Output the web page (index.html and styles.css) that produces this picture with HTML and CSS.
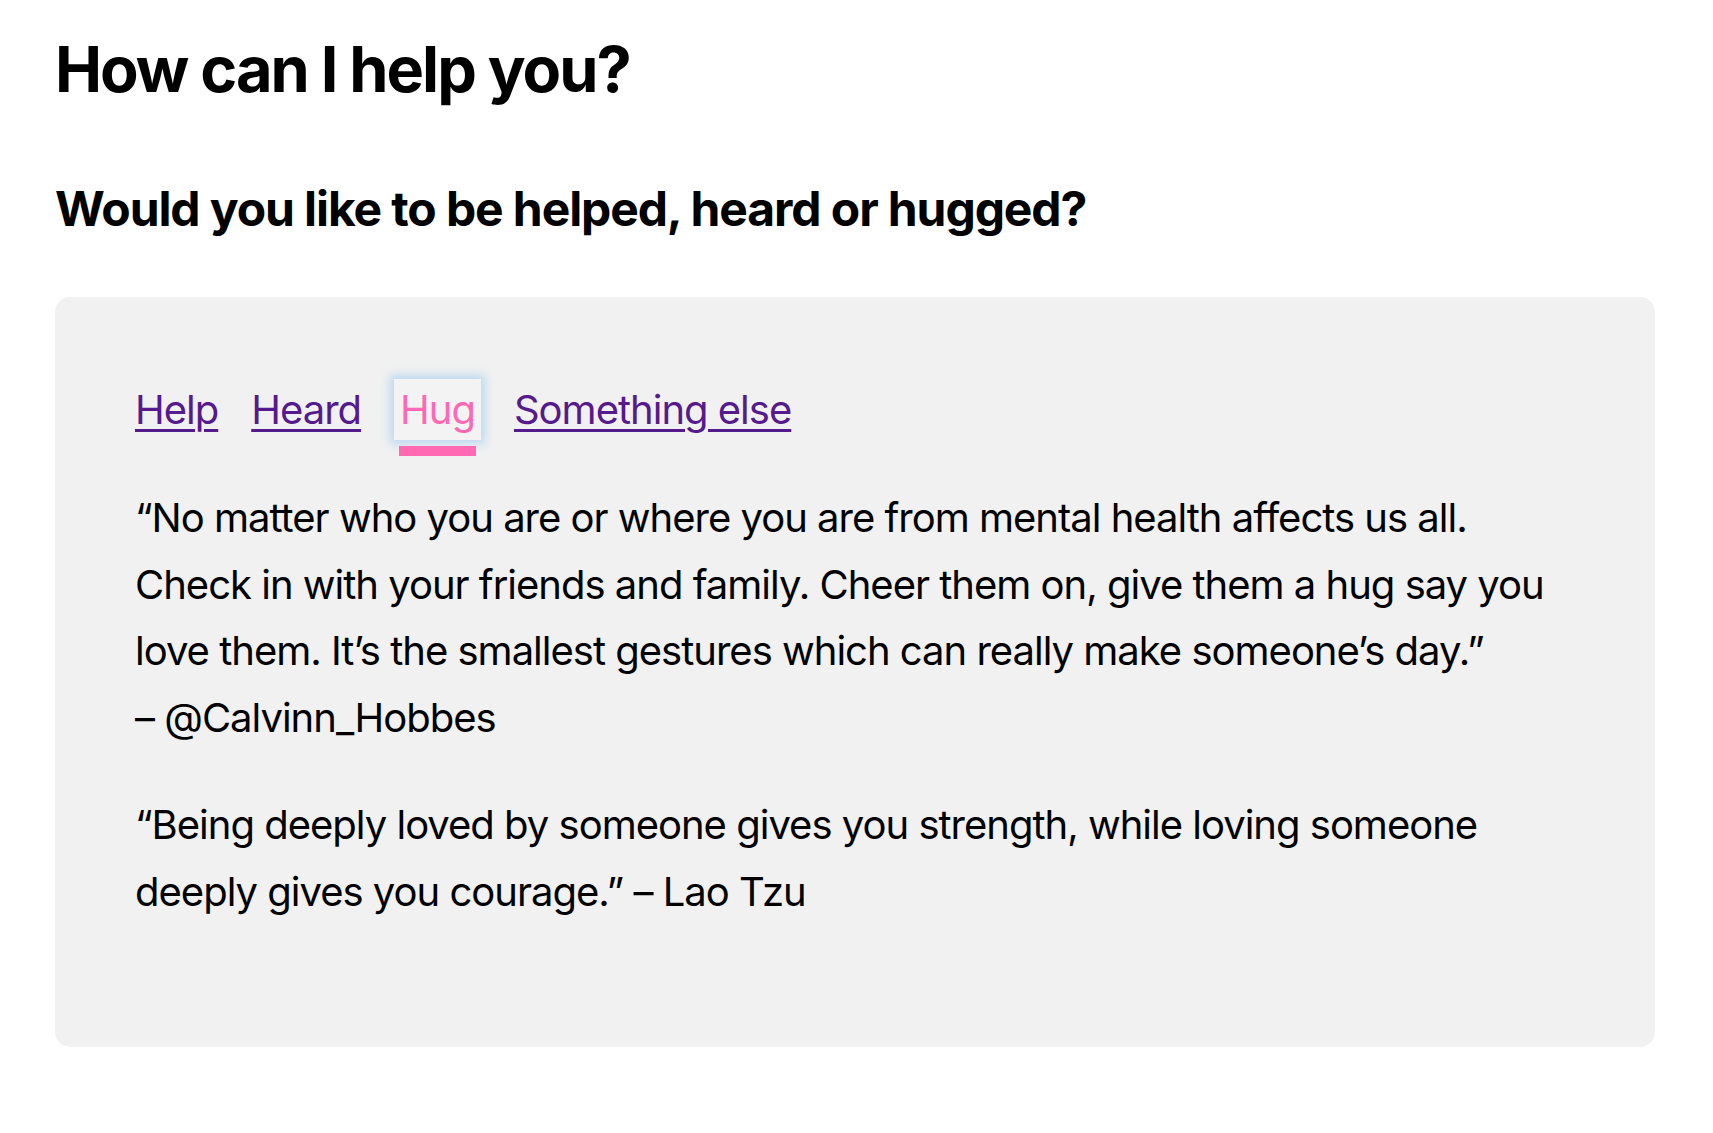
FILE: index.html
```html
<!DOCTYPE html>
<html lang="en">
<head>
<meta charset="utf-8">
<title>How can I help you?</title>
<link rel="stylesheet" href="styles.css">
</head>
<body>
<main class="page">
  <h1 class="title">How can I help you?</h1>
  <h2 class="subtitle">Would you like to be helped, heard or hugged?</h2>
  <section class="card">
    <nav class="tabs">
      <div class="tab-item"><a class="tab" href="#help">Help</a></div>
      <div class="tab-item"><a class="tab" href="#heard">Heard</a></div>
      <div class="tab-item tab-item--active"><a class="tab tab--active" href="#hug">Hug</a><span class="tab-bar"></span></div>
      <div class="tab-item"><a class="tab" href="#else">Something else</a></div>
    </nav>
    <div class="panel">
      <p class="quote">“No matter who you are or where you are from mental health affects us all. Check in with your friends and family. Cheer them on, give them a hug say you love them. It’s the smallest gestures which can really make someone’s day.”<br>– @Calvinn_Hobbes</p>
      <p class="quote">“Being deeply loved by someone gives you strength, while loving someone deeply gives you courage.” – Lao Tzu</p>
    </div>
  </section>
</main>
</body>
</html>
```
FILE: styles.css
```css
html, body {
  margin: 0;
  padding: 0;
  background: #ffffff;
}

body {
  font-family: Inter, "Noto Sans", "Liberation Sans", sans-serif;
  color: #000;
}

.page {
  padding: 31px 58px 0 55px;
}

.title {
  margin: 0;
  font-size: 63px;
  line-height: 76px;
  font-weight: 700;
  letter-spacing: -2px;
}

.subtitle {
  margin: 73px 0 0 0;
  font-size: 48px;
  line-height: 58px;
  font-weight: 700;
  letter-spacing: -1.1px;
}

.card {
  margin-top: 59px;
  width: 1600px;
  box-sizing: border-box;
  background: #f1f1f1;
  border-radius: 15px;
  padding: 82px 80px 80px 80px;
}

.tabs {
  display: flex;
  align-items: flex-start;
  gap: 33px;
  font-size: 40px;
  letter-spacing: -1px;
}

.tab-item {
  display: flex;
  flex-direction: column;
}

.tab {
  display: block;
  line-height: 61px;
  color: #551a8b;
  text-decoration: underline;
  text-decoration-thickness: 3px;
  text-underline-offset: 5px;
}

.tab--active {
  padding: 0 6px;
  color: #ff69b4;
  background: #f3f3f3;
  text-decoration: none;
  box-shadow: 0 0 9px 4px rgba(170, 208, 240, 0.75);
}

.tab-bar {
  display: block;
  height: 10px;
  margin: 6px 5px 0 5px;
  background: #ff69b4;
}

.panel {
  margin-top: 29px;
}

.quote {
  margin: 0 0 41px 0;
  font-size: 40px;
  line-height: 66.6px;
  letter-spacing: -1px;
}
```
